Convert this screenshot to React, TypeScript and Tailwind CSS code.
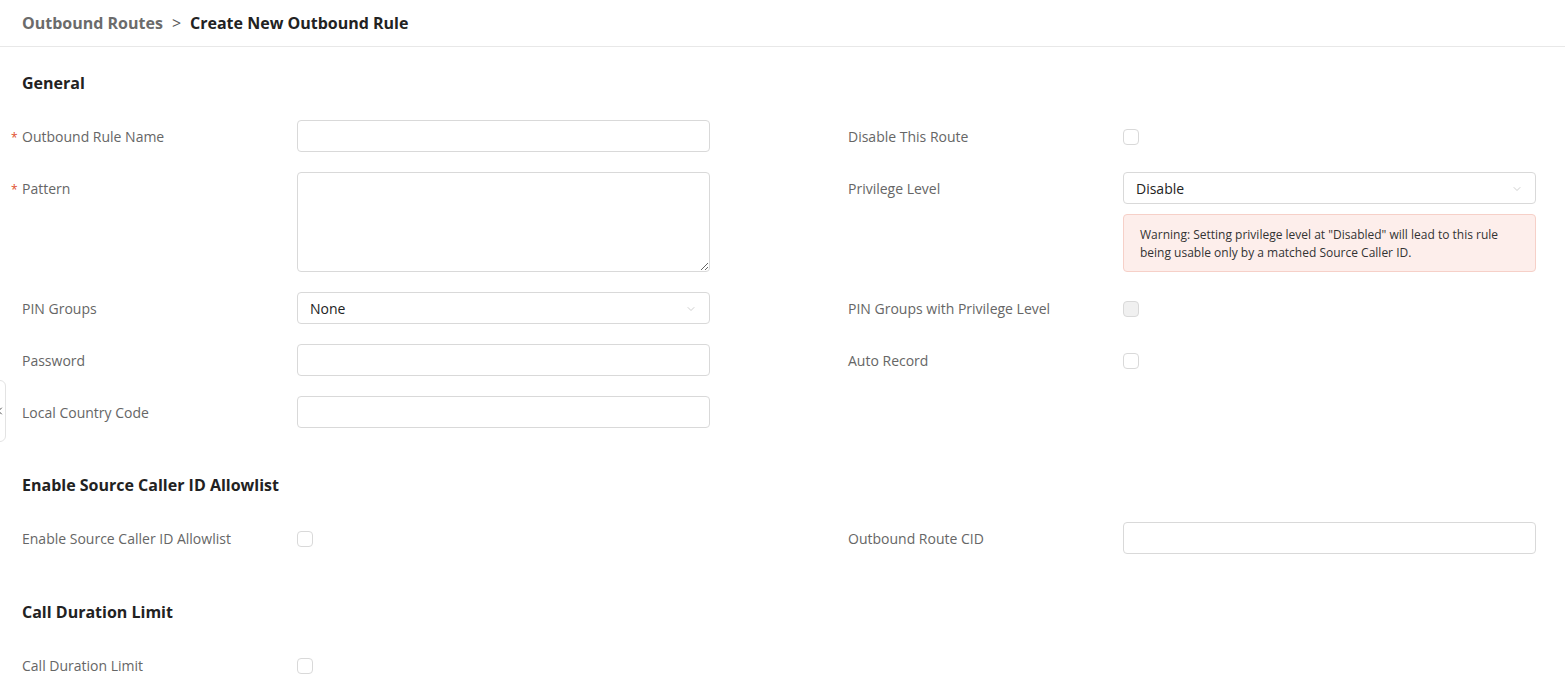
import { ChevronDown, ChevronLeft } from "lucide-react";

const font = { fontFamily: '"Open Sans", "Noto Sans", sans-serif' };

function Label({ text, required }: { text: string; required?: boolean }) {
  return (
    <div className="relative w-[275px] shrink-0 h-8 pt-[2px] flex items-center text-sm text-[#666]">
      {required && <span className="absolute -left-[11px] top-[10px] text-[#e0502a] text-xs">*</span>}
      {text}
    </div>
  );
}

function TextInput() {
  return <input className="w-[413px] h-8 border border-[#d9d9d9] rounded-sm px-3 text-sm outline-none" />;
}

function Select({ value }: { value: string }) {
  return (
    <div className="w-[413px] h-8 border border-[#d9d9d9] rounded-sm px-3 pt-[2px] flex items-center justify-between text-sm text-[#222]">
      <span>{value}</span>
      <ChevronDown className="w-3 h-3 text-[#bfbfbf]" strokeWidth={1.5} />
    </div>
  );
}

function Checkbox({ disabled }: { disabled?: boolean }) {
  return (
    <div className="h-8 pt-[1px] flex items-center">
      <div className={`w-4 h-4 rounded-sm border border-[#d9d9d9] ${disabled ? "bg-[#f0f0f0]" : "bg-white"}`} />
    </div>
  );
}

function Heading({ children }: { children: string }) {
  return <h3 className="text-base font-bold text-[#222] leading-6">{children}</h3>;
}

export default function App() {
  return (
    <div className="relative min-h-[696px] bg-white" style={font}>
      {/* Breadcrumb */}
      <div className="h-[47px] border-b border-[#e8e8e8] px-[22px] flex items-center gap-[9px] text-base font-bold">
        <span className="text-[#6b6b6b]">Outbound Routes</span>
        <span className="text-[#5a5a5a] font-normal">&gt;</span>
        <span className="text-[#222]">Create New Outbound Rule</span>
      </div>

      {/* Collapse tab */}
      <div className="absolute -left-[14px] top-[380px] w-5 h-[62px] border border-[#e3e3e3] rounded-md bg-white flex items-center justify-end">
        <ChevronLeft className="w-3 h-3 text-[#555] -mr-[1px]" strokeWidth={2} />
      </div>

      <div className="px-[22px] pt-[24px]">
        {/* General */}
        <Heading>General</Heading>
        <div className="mt-[25px] flex flex-col gap-5">
          <div className="flex gap-[138px]">
            <div className="flex">
              <Label text="Outbound Rule Name" required />
              <TextInput />
            </div>
            <div className="flex">
              <Label text="Disable This Route" />
              <Checkbox />
            </div>
          </div>

          <div className="flex gap-[138px]">
            <div className="flex items-start">
              <Label text="Pattern" required />
              <textarea className="w-[413px] h-[100px] border border-[#d9d9d9] rounded-sm px-3 py-1 text-sm outline-none block" />
            </div>
            <div className="flex items-start">
              <Label text="Privilege Level" />
              <div className="flex flex-col gap-[10px]">
                <Select value="Disable" />
                <div className="w-[413px] border border-[#f6d0c8] bg-[#fdeeeb] rounded-sm px-4 pt-[11px] pb-[9px] text-xs leading-[18px] text-[#333]">
                  Warning: Setting privilege level at "Disabled" will lead to this rule being usable only by a matched Source Caller ID.
                </div>
              </div>
            </div>
          </div>

          <div className="flex gap-[138px]">
            <div className="flex">
              <Label text="PIN Groups" />
              <Select value="None" />
            </div>
            <div className="flex">
              <Label text="PIN Groups with Privilege Level" />
              <Checkbox disabled />
            </div>
          </div>

          <div className="flex gap-[138px]">
            <div className="flex">
              <Label text="Password" />
              <TextInput />
            </div>
            <div className="flex">
              <Label text="Auto Record" />
              <Checkbox />
            </div>
          </div>

          <div className="flex">
            <Label text="Local Country Code" />
            <TextInput />
          </div>
        </div>

        {/* Source Caller ID */}
        <div className="mt-[45px]">
          <Heading>Enable Source Caller ID Allowlist</Heading>
        </div>
        <div className="mt-[25px] flex gap-[138px]">
          <div className="flex w-[688px]">
            <Label text="Enable Source Caller ID Allowlist" />
            <Checkbox />
          </div>
          <div className="flex">
            <Label text="Outbound Route CID" />
            <TextInput />
          </div>
        </div>

        {/* Call Duration */}
        <div className="mt-[46px]">
          <Heading>Call Duration Limit</Heading>
        </div>
        <div className="mt-[25px] flex">
          <Label text="Call Duration Limit" />
          <Checkbox />
        </div>
      </div>
    </div>
  );
}
